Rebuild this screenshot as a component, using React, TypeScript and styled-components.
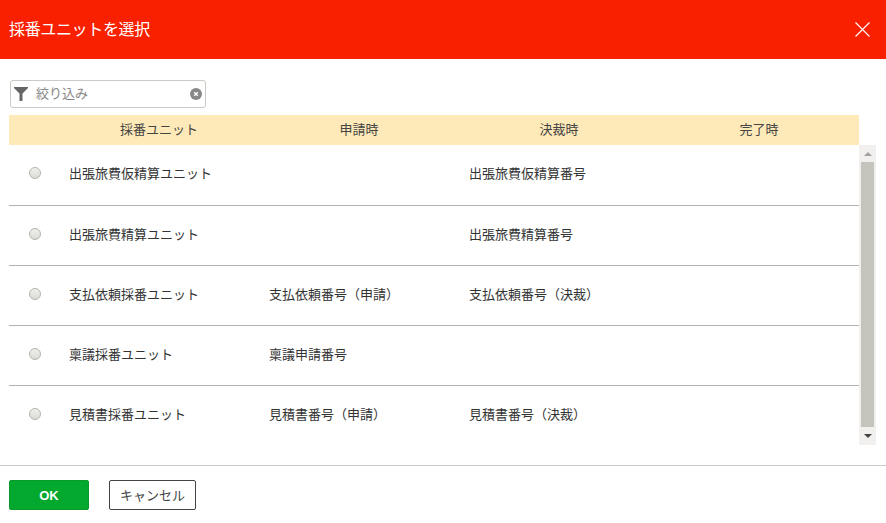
import styled, { createGlobalStyle } from "styled-components";

const GlobalStyle = createGlobalStyle`
  html, body {
    margin: 0;
    padding: 0;
    background: #fff;
    font-family: "Liberation Sans", "Noto Sans CJK JP", sans-serif;
    font-size: 13px;
    color: #333;
  }
`;

const units = [
  { name: "出張旅費仮精算ユニット", apply: "", decide: "出張旅費仮精算番号" },
  { name: "出張旅費精算ユニット", apply: "", decide: "出張旅費精算番号" },
  { name: "支払依頼採番ユニット", apply: "支払依頼番号（申請）", decide: "支払依頼番号（決裁）" },
  { name: "稟議採番ユニット", apply: "稟議申請番号", decide: "" },
  { name: "見積書採番ユニット", apply: "見積書番号（申請）", decide: "見積書番号（決裁）" },
];

export default function App() {
  return (
    <Dialog>
      <GlobalStyle />
      <Header>
        <Title>採番ユニットを選択</Title>
        <CloseButton aria-label="閉じる">
          <svg width="15" height="15" viewBox="0 0 15 15">
            <path d="M0.5 0.5L14.5 14.5M14.5 0.5L0.5 14.5" stroke="#fff" strokeWidth="1.1" fill="none" />
          </svg>
        </CloseButton>
      </Header>

      <Body>
        <FilterBox>
          <svg width="14" height="14" viewBox="0 0 14 14">
            <path d="M0 0H14V1L8.5 6.5V14H5.5V6.5L0 1Z" fill="#666" />
          </svg>
          <FilterText>絞り込み</FilterText>
          <ClearIcon width="12" height="12" viewBox="0 0 12 12">
            <circle cx="6" cy="6" r="6" fill="#888" />
            <path d="M4.2 4.2L7.8 7.8M7.8 4.2L4.2 7.8" stroke="#fff" strokeWidth="1.4" />
          </ClearIcon>
        </FilterBox>

        <TableHead>
          <span />
          <HeadCell>採番ユニット</HeadCell>
          <HeadCell>申請時</HeadCell>
          <HeadCell>決裁時</HeadCell>
          <HeadCell>完了時</HeadCell>
        </TableHead>

        <ListArea>
          <Rows>
            {units.map((unit, i) => (
              <Row key={unit.name} $last={i === units.length - 1}>
                <Radio />
                <Cell>{unit.name}</Cell>
                <Cell>{unit.apply}</Cell>
                <Cell>{unit.decide}</Cell>
                <Cell />
              </Row>
            ))}
          </Rows>
          <Scrollbar>
            <Arrow $up />
            <Thumb />
            <Arrow />
          </Scrollbar>
        </ListArea>
      </Body>

      <Footer>
        <OkButton>OK</OkButton>
        <CancelButton>キャンセル</CancelButton>
      </Footer>
    </Dialog>
  );
}

const Dialog = styled.div`
  width: 886px;
  height: 523px;
  display: flex;
  flex-direction: column;
  overflow: hidden;
`;

const Header = styled.div`
  height: 59px;
  flex-shrink: 0;
  background: #f92000;
  display: flex;
  align-items: center;
  justify-content: space-between;
  padding: 0 16px 0 9px;
`;

const Title = styled.h1`
  margin: 0 0 4px;
  font-size: 16px;
  font-weight: 400;
  letter-spacing: -0.35px;
  color: #fff;
`;

const CloseButton = styled.div`
  width: 15px;
  height: 15px;
  display: flex;
`;

const Body = styled.div`
  height: 407px;
  flex-shrink: 0;
  padding: 21px 0 0 9px;
  box-sizing: border-box;
  border-bottom: 1px solid #cccac4;
`;

const FilterBox = styled.div`
  width: 196px;
  height: 28px;
  margin-left: 1px;
  box-sizing: border-box;
  border: 1px solid #cccac4;
  border-radius: 3px;
  display: flex;
  align-items: center;
  padding: 0 3px 0 3px;
  background: #fff;
`;

const FilterText = styled.span`
  margin: 0 0 4px 8px;
  flex: 1;
  font-size: 13px;
  color: #888;
`;

const ClearIcon = styled.svg`
  flex-shrink: 0;
`;

const TableHead = styled.div`
  margin-top: 7px;
  width: 850px;
  height: 30px;
  background: #feeab8;
  display: grid;
  grid-template-columns: 50px repeat(4, 200px);
  align-items: center;
`;

const HeadCell = styled.div`
  margin-bottom: 4px;
  text-align: center;
  font-size: 13px;
  color: #444;
`;

const ListArea = styled.div`
  display: flex;
  height: 300px;
`;

const Rows = styled.div`
  width: 850px;
  padding-top: 1px;
`;

const Row = styled.div<{ $last?: boolean }>`
  height: 60px;
  box-sizing: border-box;
  display: grid;
  grid-template-columns: 50px repeat(4, 200px);
  align-items: center;
  border-bottom: 1px solid ${(p) => (p.$last ? "transparent" : "#b5b4ac")};

  &:first-child {
    padding-bottom: 2px;
  }
`;

const Radio = styled.div`
  width: 12px;
  height: 12px;
  box-sizing: border-box;
  margin: 0 0 3px 20px;
  border-radius: 50%;
  border: 1px solid #b5b4ac;
  background: linear-gradient(#efefec, #dbdbd6);
`;

const Cell = styled.div`
  padding-left: 10px;
  margin-bottom: 4px;
  font-size: 13px;
  color: #333;
`;

const Scrollbar = styled.div`
  width: 17px;
  height: 300px;
  background: #f1f0ee;
  display: flex;
  flex-direction: column;
  align-items: center;
`;

const Arrow = styled.div<{ $up?: boolean }>`
  width: 0;
  height: 0;
  flex-shrink: 0;
  margin: ${(p) => (p.$up ? "7px 0 6px" : "0")};
  border-left: 4px solid transparent;
  border-right: 4px solid transparent;
  ${(p) => (p.$up ? "border-bottom: 4px solid #a3a29c;" : "border-top: 4px solid #444;")}
`;

const Thumb = styled.div`
  width: 13px;
  height: 265px;
  margin-bottom: 7px;
  background: #c5c4bc;
  flex-shrink: 0;
`;

const Footer = styled.div`
  flex: 1;
  display: flex;
  align-items: flex-start;
  gap: 20px;
  padding: 14px 0 0 9px;
`;

const OkButton = styled.button`
  width: 80px;
  height: 30px;
  padding: 0;
  box-sizing: border-box;
  border: 1px solid #0a9a2c;
  border-radius: 2px;
  background: #03a92f;
  color: #fff;
  font-family: inherit;
  font-size: 13px;
  font-weight: 700;
`;

const CancelButton = styled.button`
  width: 87px;
  height: 30px;
  padding: 0 0 2px;
  box-sizing: border-box;
  border: 1px solid #444;
  border-radius: 2px;
  background: #fff;
  color: #444;
  font-family: inherit;
  font-size: 13px;
`;
